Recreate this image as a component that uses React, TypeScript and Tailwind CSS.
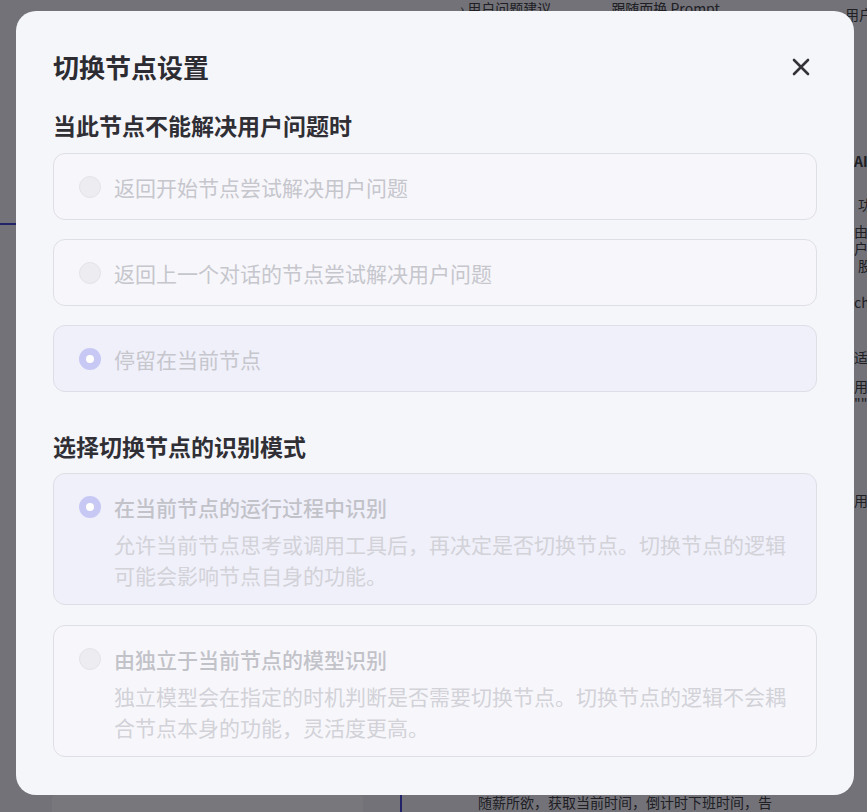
const font = { fontFamily: '"Noto Sans CJK SC", "Noto Sans", sans-serif' };

type Opt = { title: string; desc?: string; selected?: boolean };

const fallbackOptions: Opt[] = [
  { title: '返回开始节点尝试解决用户问题' },
  { title: '返回上一个对话的节点尝试解决用户问题' },
  { title: '停留在当前节点', selected: true },
];

const modeOptions: Opt[] = [
  {
    title: '在当前节点的运行过程中识别',
    desc: '允许当前节点思考或调用工具后，再决定是否切换节点。切换节点的逻辑可能会影响节点自身的功能。',
    selected: true,
  },
  {
    title: '由独立于当前节点的模型识别',
    desc: '独立模型会在指定的时机判断是否需要切换节点。切换节点的逻辑不会耦合节点本身的功能，灵活度更高。',
  },
];

function Radio({ on }: { on?: boolean }) {
  return on ? (
    <span className="flex h-[22px] w-[22px] shrink-0 items-center justify-center rounded-full bg-[#c7c8f4]">
      <span className="h-[8px] w-[8px] rounded-full bg-white" />
    </span>
  ) : (
    <span className="h-[22px] w-[22px] shrink-0 rounded-full border border-[#e3e3e8] bg-[#ededf1]" />
  );
}

function SimpleCard({ o }: { o: Opt }) {
  return (
    <div
      className={`flex h-[67px] items-center gap-[13px] rounded-[12px] border border-[#dedee6] pl-[25px] ${
        o.selected ? 'bg-[#f0f0fa]' : 'bg-[#f7f7fb]'
      }`}
    >
      <Radio on={o.selected} />
      <span className="text-[21px] leading-[28px] text-[#c6c6cd]">{o.title}</span>
    </div>
  );
}

function DescCard({ o }: { o: Opt }) {
  return (
    <div
      className={`flex gap-[13px] rounded-[12px] border border-[#dedee6] pb-[13px] pl-[25px] pr-[30px] pt-[19px] ${
        o.selected ? 'bg-[#f0f0fa]' : 'bg-[#f7f7fb]'
      }`}
    >
      <div className="flex h-[28px] items-center">
        <Radio on={o.selected} />
      </div>
      <div>
        <div className="text-[21px] font-medium leading-[28px] text-[#c2c2c9]">{o.title}</div>
        <div className="mt-[8px] text-[21px] leading-[31px] text-[#d2d2d8]">{o.desc}</div>
      </div>
    </div>
  );
}

export default function App() {
  return (
    <div className="relative h-[812px] w-full overflow-hidden bg-[#f4f4f6]" style={font}>
      {/* page underneath */}
      <div className="flex h-full">
        <div className="flex w-[400px] flex-col">
          <div className="mt-[223px] h-[2px] w-full bg-[#3b3bd0]" />
          <div className="ml-[52px] mt-auto h-[17px] w-[311px] rounded-t bg-white" />
        </div>
        <div className="flex w-[445px] flex-col">
          <div className="flex gap-[60px] whitespace-nowrap pl-[60px] text-[14px] leading-[16px] text-[#333]">
            <span>› 用户问题建议</span>
            <span>跟随而换 Prompt</span>
          </div>
          <div className="mt-auto flex h-[20px]">
            <div className="h-full w-[2px] bg-[#3b3bd0]" />
            <div className="whitespace-nowrap pl-[76px] text-[14px] leading-[20px] text-[#333]">
              随薪所欲，获取当前时间，倒计时下班时间，告
            </div>
          </div>
        </div>
        <div className="min-w-0 flex-1 overflow-hidden whitespace-nowrap text-[14px] leading-[17px] text-[#333]">
          <div className="pt-[6px]">用户</div>
          <div className="mt-[130px] pl-[9px] font-semibold">AI时</div>
          <div className="mt-[26px] pl-[13px]">功</div>
          <div className="mt-[10px] pl-[9px]">由合</div>
          <div className="pl-[9px]">户聊</div>
          <div className="pl-[13px]">股</div>
          <div className="mt-[20px] pl-[9px]">cha</div>
          <div className="mt-[38px] pl-[9px]">适用</div>
          <div className="mt-[12px] pl-[9px]">用于</div>
          <div className="pl-[9px]">"""</div>
          <div className="mt-[80px] pl-[9px]">用户</div>
        </div>
      </div>

      {/* overlay + dialog */}
      <div className="absolute inset-0 bg-[rgba(15,15,25,0.57)] pl-[16px] pt-[11px]">
        <div className="h-[784px] w-[838px] rounded-[20px] bg-[#f5f6fa] px-[37px] pt-[38px]">
          <div className="flex items-center justify-between">
            <h2 className="text-[26px] font-semibold leading-[36px] text-[#2c2c32]">切换节点设置</h2>
            <button className="flex h-8 w-8 items-center justify-center text-[#333338]">
              <svg width="20" height="20" viewBox="0 0 20 20" fill="none" stroke="currentColor" strokeWidth="2.6" strokeLinecap="round">
                <path d="M3 3L17 17M17 3L3 17" />
              </svg>
            </button>
          </div>

          <h3 className="mt-[24px] text-[23px] font-semibold leading-[32px] text-[#2f2f35]">当此节点不能解决用户问题时</h3>
          <div className="mt-[12px] flex flex-col gap-[19px]">
            {fallbackOptions.map((o) => (
              <SimpleCard key={o.title} o={o} />
            ))}
          </div>

          <h3 className="mt-[38px] text-[23px] font-semibold leading-[32px] text-[#2f2f35]">选择切换节点的识别模式</h3>
          <div className="mt-[11px] flex flex-col gap-[20px]">
            {modeOptions.map((o) => (
              <DescCard key={o.title} o={o} />
            ))}
          </div>
        </div>
      </div>
    </div>
  );
}
